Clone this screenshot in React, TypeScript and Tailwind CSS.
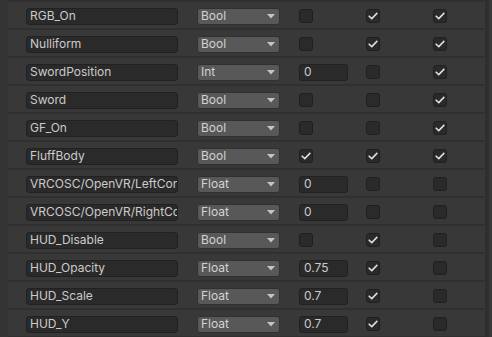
import { ReactNode } from 'react'

type Row = {
  name: string
  type: 'Bool' | 'Int' | 'Float'
  value?: string
  a?: boolean
  b: boolean
  c: boolean
}

const rows: Row[] = [
  { name: 'RGB_On', type: 'Bool', a: false, b: true, c: true },
  { name: 'Nulliform', type: 'Bool', a: false, b: true, c: true },
  { name: 'SwordPosition', type: 'Int', value: '0', b: false, c: true },
  { name: 'Sword', type: 'Bool', a: false, b: false, c: true },
  { name: 'GF_On', type: 'Bool', a: false, b: false, c: true },
  { name: 'FluffBody', type: 'Bool', a: true, b: true, c: true },
  { name: 'VRCOSC/OpenVR/LeftController', type: 'Float', value: '0', b: false, c: false },
  { name: 'VRCOSC/OpenVR/RightController', type: 'Float', value: '0', b: false, c: false },
  { name: 'HUD_Disable', type: 'Bool', a: false, b: true, c: false },
  { name: 'HUD_Opacity', type: 'Float', value: '0.75', b: true, c: false },
  { name: 'HUD_Scale', type: 'Float', value: '0.7', b: true, c: false },
  { name: 'HUD_Y', type: 'Float', value: '0.7', b: true, c: false },
]

function Checkbox({ on }: { on: boolean }) {
  return (
    <div className="w-[14px] h-[14px] rounded-[3px] bg-[#2a2a2a] border border-[#1f1f1f] flex items-center justify-center">
      {on && (
        <svg width="10" height="8" viewBox="0 0 10 8">
          <path d="M1.2 4.2 L3.8 6.6 L8.8 1.4" fill="none" stroke="#e0e0e0" strokeWidth="1.5" strokeLinecap="square" />
        </svg>
      )}
    </div>
  )
}

function Field({ width, children }: { width: string; children: ReactNode }) {
  return (
    <div
      className={`${width} h-[17px] rounded-[3px] bg-[#2a2a2a] border border-[#212121] text-[#cbcbcb] flex items-center px-[3px] overflow-hidden whitespace-nowrap`}
    >
      {children}
    </div>
  )
}

function Dropdown({ label }: { label: string }) {
  return (
    <div className="w-[83px] h-[17px] rounded-[3px] bg-[#585858] border border-[#303030] text-[#d2d2d2] flex items-center justify-between pl-[3px] pr-[4px]">
      <span>{label}</span>
      <svg width="8" height="5" viewBox="0 0 8 5">
        <path d="M0 0 H8 L4 4.5 Z" fill="#c4c4c4" />
      </svg>
    </div>
  )
}

export default function App() {
  return (
    <div
      className="w-[492px] h-[337px] bg-[#303030] flex overflow-hidden text-[12px] leading-none"
      style={{ fontFamily: 'Inter, "Noto Sans", sans-serif' }}
    >
      <div className="w-[8px] bg-[#333333]" />
      <div className="w-[477px] flex flex-col gap-[2px] pt-[2px]">
        {rows.map((r) => (
          <div key={r.name} className="h-[26px] bg-[#383838] flex items-center pl-[18px] pt-[2px] shrink-0">
            <Field width="w-[152px]">{r.name}</Field>
            <div className="ml-[19px]">
              <Dropdown label={r.type} />
            </div>
            <div className="ml-[19px] w-[67px]">
              {r.value !== undefined ? (
                <Field width="w-[49px]">
                  <span className="pl-[1px]">{r.value}</span>
                </Field>
              ) : (
                <Checkbox on={!!r.a} />
              )}
            </div>
            <div className="w-[67px]">
              <Checkbox on={r.b} />
            </div>
            <div>
              <Checkbox on={r.c} />
            </div>
          </div>
        ))}
      </div>
      <div className="w-[4px] bg-[#2e2e2e]" />
      <div className="w-[3px] bg-[#383838]" />
    </div>
  )
}
